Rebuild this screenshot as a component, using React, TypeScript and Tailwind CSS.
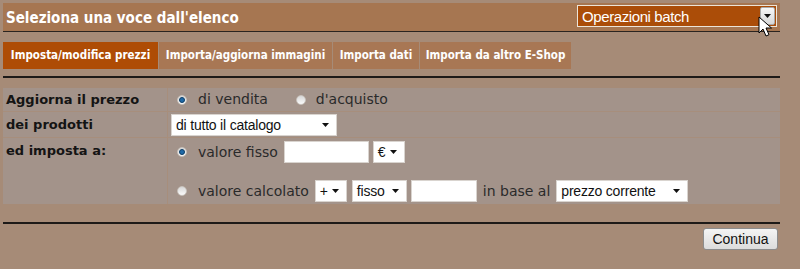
import React from 'react';

const verdana = "font-['DejaVu_Sans',Verdana,sans-serif]";
const tahoma = "font-['DejaVu_Sans_Condensed','DejaVu_Sans',Tahoma,sans-serif]";
const arial = "font-['Liberation_Sans',Arial,sans-serif]";

const Caret = () => (
  <svg width="7" height="4" viewBox="0 0 7 4" className="shrink-0">
    <path d="M0 0h7L3.5 4z" fill="#111" />
  </svg>
);

const Radio = ({ checked }: { checked?: boolean }) => (
  <span className="w-[10px] h-[10px] rounded-full border border-[#c9c3bd] bg-gradient-to-b from-[#d8d8d8] to-[#fafafa] flex items-center justify-center shrink-0">
    {checked && <span className="w-[6px] h-[6px] rounded-full bg-[#1f6aa8] border border-[#0d3e66]" />}
  </span>
);

const FakeSelect = ({ label, className }: { label: string; className: string }) => (
  <div className={`h-[22px] bg-white border border-[#d9d4cf] flex items-center justify-between pl-[4px] pr-[7px] text-[14px] tracking-[-0.2px] text-[#111] ${arial} ${className}`}>
    <span className="leading-none">{label}</span>
    <Caret />
  </div>
);

const Cursor = () => (
  <svg width="16" height="22" viewBox="0 0 16 22" className="absolute left-[758px] top-[16px]">
    <path d="M1 1v16l4-4 3 7 3-1.3-3-6.7h5.5z" fill="#fff" stroke="#000" strokeWidth="1" strokeLinejoin="round" />
  </svg>
);

const tabs = [
  { label: 'Imposta/modifica prezzi', w: 'w-[155px]' },
  { label: 'Importa/aggiorna immagini', w: 'w-[173px]' },
  { label: 'Importa dati', w: 'w-[86px]' },
  { label: 'Importa da altro E-Shop', w: 'w-[151px]' },
];

export default function App() {
  return (
    <div className="relative w-[800px] h-[269px] bg-[#a68b77] pl-[3px] pt-[3px] overflow-hidden">
      <div className="w-[777px]">
        <div className="h-[29px] bg-[#a67651] flex items-start justify-between pl-[3px] pr-[3px] pt-[2px] border-b border-[#2a2420]">
          <h1 className={`${tahoma} font-bold text-[15px] text-white leading-none mt-[6px]`}>Seleziona una voce dall'elenco</h1>
          <div className="w-[200px] h-[22px] border border-[#ece4d8] bg-[#ab4d08] flex items-center justify-between pl-[4px] pr-[1px]">
            <span className={`${arial} text-white text-[15px] tracking-[-0.4px] leading-none`}>Operazioni batch</span>
            <span className="w-[15px] h-[18px] bg-gradient-to-b from-[#f6f6f6] to-[#d8d8d8] border border-[#a9a9a9] rounded-[2px] flex items-center justify-center">
              <Caret />
            </span>
          </div>
        </div>

        <div className="flex mt-[10px] h-[27px] gap-px">
          {tabs.map((t, i) => (
            <div
              key={t.label}
              className={`${tahoma} ${t.w} whitespace-nowrap font-bold text-[11.5px] text-white flex items-center justify-center ${i === 0 ? 'bg-[#ae4c05]' : 'bg-[#a87754]'}`}
            >
              {t.label}
            </div>
          ))}
        </div>

        <div className="mt-[7px] h-[2px] bg-[#1d1a18]" />

        <div className={`mt-[10px] grid grid-cols-[164px_1fr] gap-px bg-[#a78e7c] ${verdana}`}>
          <div className="bg-[#a3938a] h-[23px] flex items-center pl-[3px] font-bold text-[13px] text-[#141414]">Aggiorna il prezzo</div>
          <div className="bg-[#a3938a] h-[23px] flex items-center pl-[9px] text-[14px] text-[#2a2a2a]">
            <Radio checked />
            <span className="ml-[11px]">di vendita</span>
            <span className="ml-[28px]"><Radio /></span>
            <span className="ml-[10px]">d'acquisto</span>
          </div>

          <div className="bg-[#a3938a] h-[25px] flex items-center pl-[3px] font-bold text-[13px] text-[#141414]">dei prodotti</div>
          <div className="bg-[#a3938a] h-[25px] flex items-center pl-[3px]">
            <FakeSelect label="di tutto il catalogo" className="w-[166px] h-[21px]" />
          </div>

          <div className="bg-[#a3938a] h-[66px] pl-[3px] pt-[3px] font-bold text-[13px] text-[#141414]">ed imposta a:</div>
          <div className="bg-[#a3938a] h-[66px] pl-[9px] pt-[3px] text-[14px] text-[#2a2a2a] flex flex-col gap-[17px]">
            <div className="flex items-center h-[22px]">
              <Radio checked />
              <span className="ml-[11px]">valore fisso</span>
              <div className="ml-[6px] w-[85px] h-[22px] bg-white border border-[#d9d4cf]" />
              <FakeSelect label="€" className="ml-[4px] w-[32px]" />
            </div>
            <div className="flex items-center h-[22px]">
              <Radio />
              <span className="ml-[11px]">valore calcolato</span>
              <FakeSelect label="+" className="ml-[6px] w-[32px]" />
              <FakeSelect label="fisso" className="ml-[5px] w-[55px]" />
              <div className="ml-[4px] w-[66px] h-[22px] bg-white border border-[#d9d4cf]" />
              <span className="ml-[6px]">in base al</span>
              <FakeSelect label="prezzo corrente" className="ml-[6px] w-[132px]" />
            </div>
          </div>
        </div>

        <div className="mt-[18px] h-[2px] bg-[#1d1a18]" />

        <div className="flex justify-end mt-[4px] pr-[2px]">
          <button className={`${arial} w-[75px] h-[22px] text-[14px] text-[#111] rounded-[3px] border border-[#8c8c8c] bg-gradient-to-b from-[#f4f4f4] to-[#dcdcdc] leading-none`}>
            Continua
          </button>
        </div>
      </div>
      <Cursor />
    </div>
  );
}
